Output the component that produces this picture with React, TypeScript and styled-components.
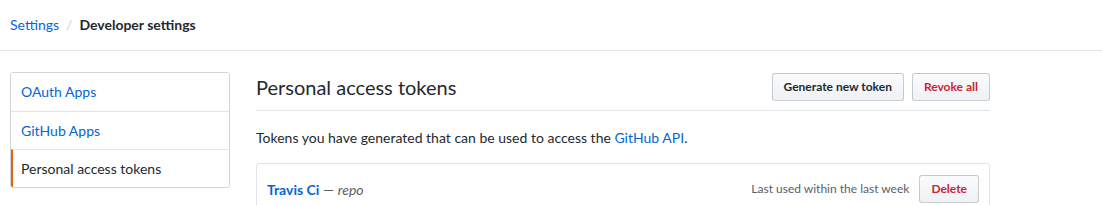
import React from "react";
import styled, { createGlobalStyle } from "styled-components";

const Global = createGlobalStyle`
  html, body { margin: 0; padding: 0; background: #fff; }
  body {
    font-family: Lato, "Liberation Sans", sans-serif;
    font-size: 14px;
    line-height: 1.5;
    color: #24292e;
  }
  * { box-sizing: border-box; }
  a { color: #0366d6; text-decoration: none; }
`;

const Header = styled.div`
  height: 51px;
  border-bottom: 1px solid #e1e4e8;
  display: flex;
  align-items: center;
  padding: 0 10px 2px;
`;

const Crumb = styled.a`
  font-size: 14px;
`;

const Sep = styled.span`
  color: #d1d5da;
  margin: 0 7px;
`;

const CrumbCurrent = styled.span`
  font-weight: 700;
  color: #24292e;
`;

const Layout = styled.div`
  width: 980px;
  margin-left: 10px;
  padding-top: 21px;
  display: flex;
  gap: 26px;
`;

const Menu = styled.nav`
  width: 220px;
  flex: none;
  border: 1px solid #d1d5da;
  border-radius: 3px;
  align-self: flex-start;
  overflow: hidden;
`;

const MenuItem = styled.a<{ $selected?: boolean }>`
  display: block;
  padding: 8px 10px;
  height: 38px;
  color: ${(p) => (p.$selected ? "#24292e" : "#0366d6")};
  border-left: ${(p) => (p.$selected ? "2px solid #e36209" : "none")};
  padding-left: ${(p) => (p.$selected ? "8px" : "10px")};
  & + & { border-top: 1px solid #e1e4e8; }
`;

const Main = styled.div`
  flex: 1;
  min-width: 0;
`;

const Subhead = styled.div`
  display: flex;
  align-items: center;
  padding: 1px 0 9px;
  border-bottom: 1px solid #e1e4e8;
`;

const Heading = styled.h2`
  flex: 1;
  margin: 0;
  font-size: 20px;
  font-weight: 400;
  line-height: 28px;
  color: #24292e;
`;

const Actions = styled.div`
  display: flex;
  gap: 8px;
`;

const Button = styled.button<{ $danger?: boolean }>`
  font-family: inherit;
  font-size: 12px;
  font-weight: 700;
  line-height: 20px;
  padding: 3px 11px;
  height: 28px;
  border: 1px solid rgba(27, 31, 35, 0.2);
  border-radius: 3px;
  background-image: linear-gradient(-180deg, #fafbfc 0%, #eff3f6 90%);
  color: ${(p) => (p.$danger ? "#cb2431" : "#24292e")};
  cursor: pointer;
`;

const Intro = styled.p`
  margin: 16px 0 15px;
`;

const TokenBox = styled.div`
  border: 1px solid #e1e4e8;
  border-radius: 3px;
`;

const TokenRow = styled.div`
  display: flex;
  align-items: center;
  padding: 11px 10px;
`;

const TokenName = styled.div`
  flex: 1;
`;

const TokenLink = styled.a`
  font-weight: 700;
`;

const Scope = styled.span`
  color: #586069;
  em { font-style: italic; }
`;

const LastUsed = styled.span`
  font-size: 12px;
  color: #586069;
  margin-right: 10px;
`;

export default function App() {
  return (
    <>
      <Global />
      <Header>
        <Crumb href="#">Settings</Crumb>
        <Sep>/</Sep>
        <CrumbCurrent>Developer settings</CrumbCurrent>
      </Header>
      <Layout>
        <Menu>
          <MenuItem href="#">OAuth Apps</MenuItem>
          <MenuItem href="#">GitHub Apps</MenuItem>
          <MenuItem href="#" $selected>
            Personal access tokens
          </MenuItem>
        </Menu>
        <Main>
          <Subhead>
            <Heading>Personal access tokens</Heading>
            <Actions>
              <Button>Generate new token</Button>
              <Button $danger>Revoke all</Button>
            </Actions>
          </Subhead>
          <Intro>
            Tokens you have generated that can be used to access the{" "}
            <a href="#">GitHub API</a>.
          </Intro>
          <TokenBox>
            <TokenRow>
              <TokenName>
                <TokenLink href="#">Travis Ci</TokenLink>{" "}
                <Scope>
                  — <em>repo</em>
                </Scope>
              </TokenName>
              <LastUsed>Last used within the last week</LastUsed>
              <Button $danger>Delete</Button>
            </TokenRow>
          </TokenBox>
        </Main>
      </Layout>
    </>
  );
}
